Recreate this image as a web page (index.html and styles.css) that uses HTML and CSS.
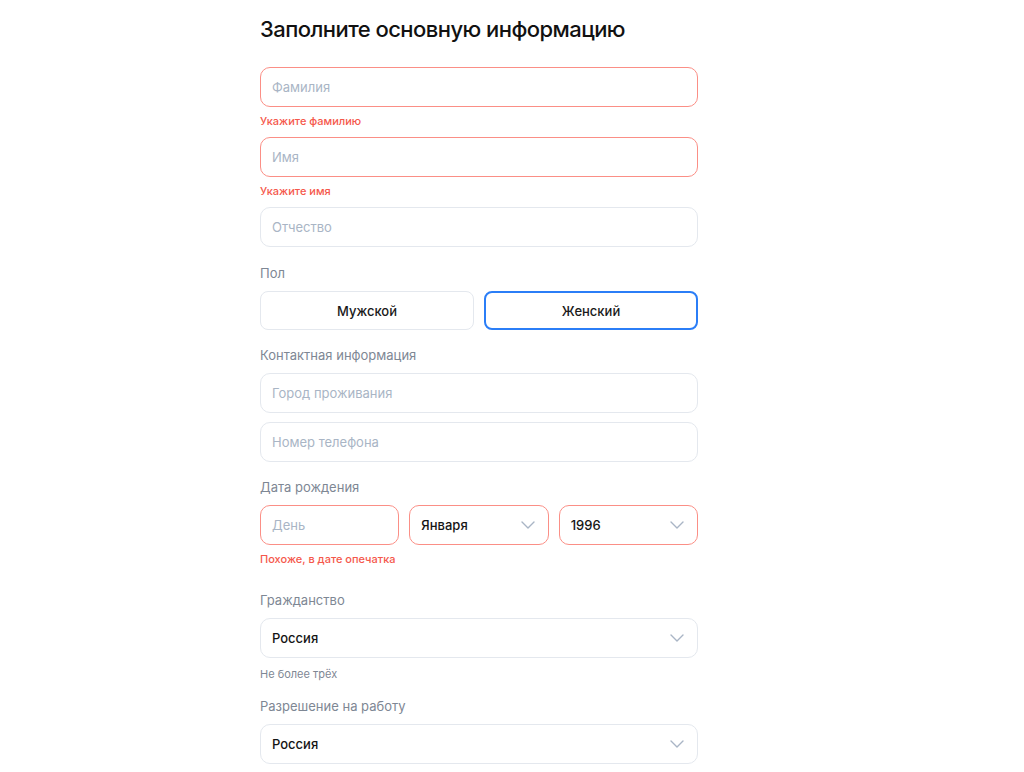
FILE: index.html
```html
<!DOCTYPE html>
<html lang="ru">
<head>
<meta charset="utf-8">
<title>Заполните основную информацию</title>
<link rel="stylesheet" href="styles.css">
</head>
<body>
<main class="form">
  <h1 class="title">Заполните основную информацию</h1>

  <div class="field field--error"><span class="placeholder">Фамилия</span></div>
  <div class="error">Укажите фамилию</div>

  <div class="field field--error field--mt9"><span class="placeholder">Имя</span></div>
  <div class="error">Укажите имя</div>

  <div class="field field--mt9"><span class="placeholder">Отчество</span></div>

  <div class="label">Пол</div>
  <div class="gender">
    <div class="gender__btn">Мужской</div>
    <div class="gender__btn gender__btn--active">Женский</div>
  </div>

  <div class="label label--17">Контактная информация</div>
  <div class="field"><span class="placeholder">Город проживания</span></div>
  <div class="field field--mt9"><span class="placeholder">Номер телефона</span></div>

  <div class="label label--17">Дата рождения</div>
  <div class="date">
    <div class="field field--error"><span class="placeholder">День</span></div>
    <div class="field field--error field--select"><span class="value">Января</span>
      <svg class="chevron" viewBox="0 0 14 8" width="14" height="8"><path d="M1 1l6 6 6-6" fill="none" stroke="#a9b5c5" stroke-width="1.4" stroke-linecap="round" stroke-linejoin="round"/></svg>
    </div>
    <div class="field field--error field--select"><span class="value">1996</span>
      <svg class="chevron" viewBox="0 0 14 8" width="14" height="8"><path d="M1 1l6 6 6-6" fill="none" stroke="#a9b5c5" stroke-width="1.4" stroke-linecap="round" stroke-linejoin="round"/></svg>
    </div>
  </div>
  <div class="error">Похоже, в дате опечатка</div>

  <div class="label label--26">Гражданство</div>
  <div class="field field--select"><span class="value">Россия</span>
    <svg class="chevron" viewBox="0 0 14 8" width="14" height="8"><path d="M1 1l6 6 6-6" fill="none" stroke="#a9b5c5" stroke-width="1.4" stroke-linecap="round" stroke-linejoin="round"/></svg>
  </div>
  <div class="hint">Не более трёх</div>

  <div class="label label--17">Разрешение на работу</div>
  <div class="field field--select"><span class="value">Россия</span>
    <svg class="chevron" viewBox="0 0 14 8" width="14" height="8"><path d="M1 1l6 6 6-6" fill="none" stroke="#a9b5c5" stroke-width="1.4" stroke-linecap="round" stroke-linejoin="round"/></svg>
  </div>
</main>
</body>
</html>
```

FILE: styles.css
```css
* { box-sizing: border-box; }
html, body { margin: 0; padding: 0; background: #fff; }
body {
  font-family: Inter, "Noto Sans", "Liberation Sans", sans-serif;
  color: #1a1a1a;
  -webkit-font-smoothing: antialiased;
}
.form {
  width: 438px;
  margin-left: 260px;
  padding-top: 15px;
  display: flex;
  flex-direction: column;
}
.title {
  margin: 0 0 24px;
  font-size: 22px;
  line-height: 28px;
  font-weight: 500;
  letter-spacing: -0.55px;
  color: #111;
}
.field {
  height: 40px;
  border: 1px solid #e4e8ee;
  border-radius: 10px;
  display: flex;
  align-items: center;
  padding: 0 13px 0 11px;
  font-size: 13px;
  background: #fff;
}
.field--mt9 { margin-top: 9px; }
.field--error { border-color: #fb8f86; }
.field--select { justify-content: space-between; }
.placeholder { color: #a9b5c5; }
.value { color: #151515; font-weight: 500; }
.chevron { display: block; }
.error {
  margin-top: 7px;
  font-size: 11px;
  line-height: 14px;
  color: #f5584c;
  font-weight: 500;
}
.hint {
  margin-top: 9px;
  font-size: 11px;
  line-height: 14px;
  color: #7e8794;
}
.label {
  margin-top: 18px;
  margin-bottom: 10px;
  font-size: 13px;
  line-height: 16px;
  color: #7e8794;
}
.label--17 { margin-top: 17px; }
.label--26 { margin-top: 26px; }
.gender {
  display: grid;
  grid-template-columns: 1fr 1fr;
  gap: 10px;
}
.gender__btn {
  height: 39px;
  border: 1px solid #e4e8ee;
  border-radius: 8px;
  display: flex;
  align-items: center;
  justify-content: center;
  font-size: 13px;
  font-weight: 500;
  color: #1a1a1a;
}
.gender__btn--active {
  border: 2px solid #2b7ef7;
}
.date {
  display: grid;
  grid-template-columns: 1fr 1fr 1fr;
  gap: 10px;
}
```
